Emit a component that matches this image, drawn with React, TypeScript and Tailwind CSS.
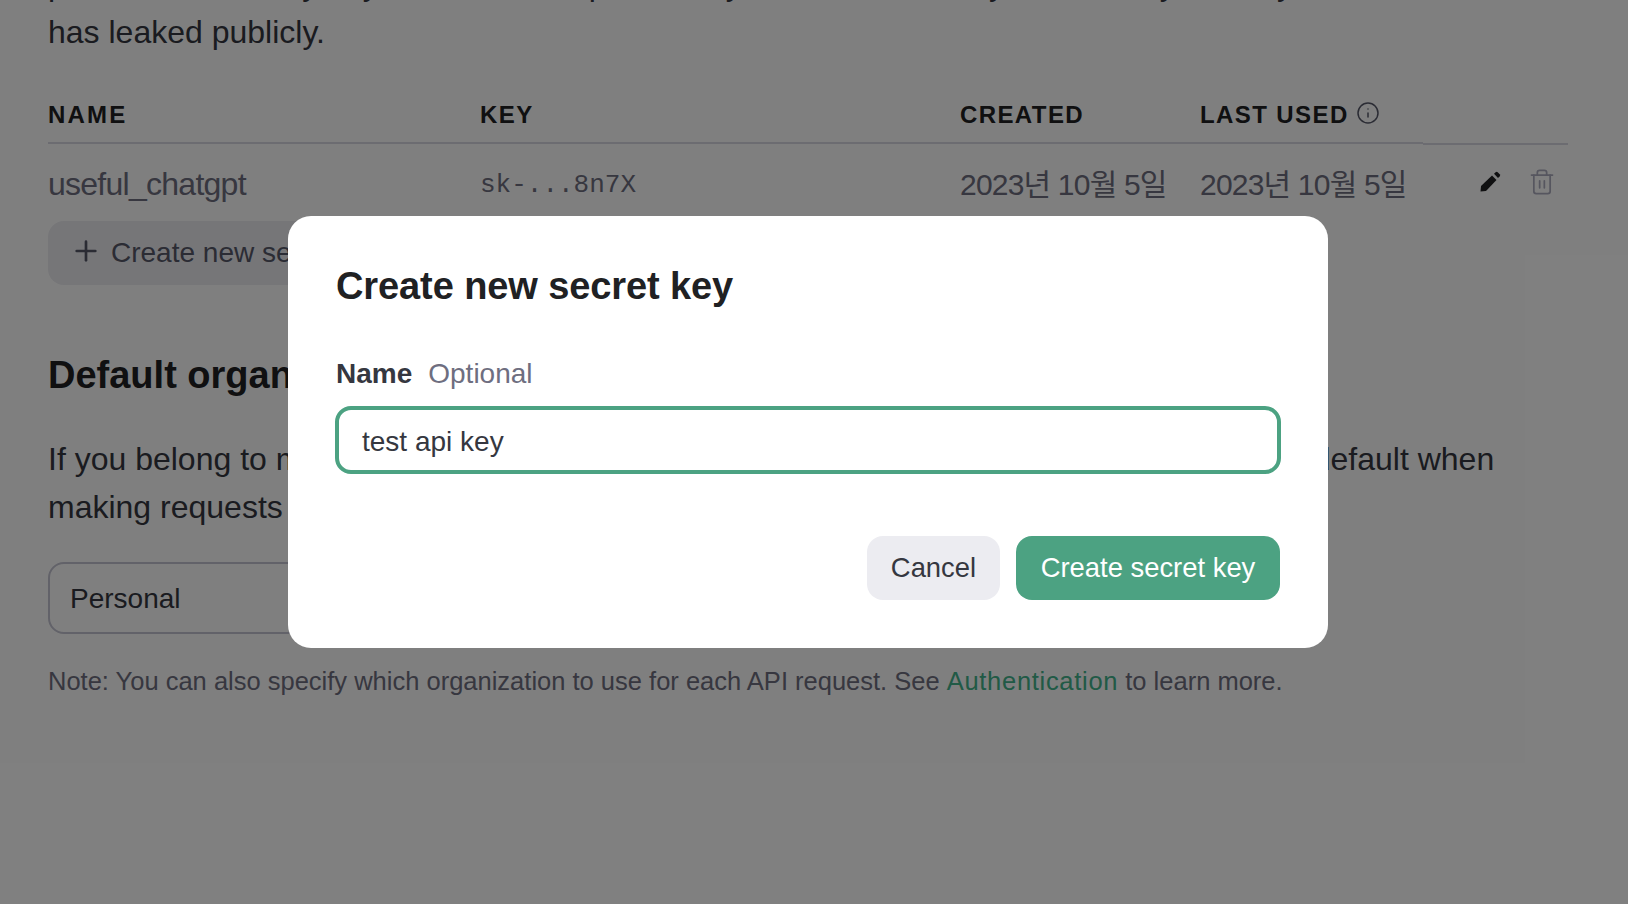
import { Plus, Info, Trash2 } from "lucide-react";

const font = { fontFamily: '"Liberation Sans", "Noto Sans CJK KR", sans-serif' };

const Modal = () => (
  <div className="absolute inset-0 bg-black/50">
    <div className="absolute left-[288px] top-[216px] w-[1040px] h-[432px] bg-white rounded-[23px] px-[48px] pt-[48px]">
      <h2 className="text-[38px] leading-[44px] font-bold text-[#202123] tracking-[-0.1px]">
        Create new secret key
      </h2>
      <div className="mt-[48px] flex gap-[16px] text-[28px] leading-[36px]">
        <span className="font-bold text-[#353740]">Name</span>
        <span className="text-[#6e6e80]">Optional</span>
      </div>
      <div className="mt-[14px] -mx-[1px] h-[68px] border-[4px] border-[#4ca282] rounded-[16px] flex items-center pt-[4px] px-[23px] text-[28px] text-[#353740]">
        test api key
      </div>
      <div className="mt-[62px] flex justify-end gap-[16px] text-[27.4px]">
        <button className="h-[64px] w-[133px] rounded-[16px] bg-[#ececf1] text-[#353740]">Cancel</button>
        <button className="h-[64px] w-[264px] rounded-[16px] bg-[#4ca282] text-white">Create secret key</button>
      </div>
    </div>
  </div>
);

export default function App() {
  return (
    <div style={font} className="relative h-[904px] w-full overflow-hidden bg-white text-[#353740]">
      <div className="pl-[48px] pr-[60px] -mt-[39px]">
        <p className="text-[32px] leading-[46px] whitespace-nowrap text-[#353740]">
          protect the security of your account, OpenAI may also automatically disable any API key that we've found
        </p>
        <p className="mt-[2px] text-[32px] leading-[46px] text-[#353740]">has leaked publicly.</p>

        {/* table head, the last cell's rule sits a pixel lower */}
        <div className="mt-[42px] grid grid-cols-[432px_480px_240px_223px_1fr] items-start text-[24px] font-bold tracking-[1.4px] text-[#202123]">
          <div className="h-[47px] border-b-2 border-[#d9d9e3] tracking-[2.2px]">NAME</div>
          <div className="h-[47px] border-b-2 border-[#d9d9e3]">KEY</div>
          <div className="h-[47px] border-b-2 border-[#d9d9e3]">CREATED</div>
          <div className="h-[47px] border-b-2 border-[#d9d9e3] flex items-start gap-[7px] whitespace-nowrap">
            LAST USED <Info className="w-[24px] h-[24px] mt-[4px] shrink-0 text-[#565869]" strokeWidth={1.5} />
          </div>
          <div className="h-[48px] border-b-2 border-[#d9d9e3]" />
        </div>
        <div className="grid grid-cols-[432px_480px_240px_1fr] h-[76px] pt-[2px] items-center text-[32px] text-[#6e6e80]">
          <div className="tracking-[-0.74px]">useful_chatgpt</div>
          <div className="font-['Liberation_Mono'] text-[26px] pt-[2px]">sk-...8n7X</div>
          <div className="whitespace-nowrap text-[30px] tracking-[-0.8px]">2023년 10월 5일</div>
          <div className="flex items-center justify-between pr-[12px]">
            <span className="whitespace-nowrap text-[30px] tracking-[-0.8px]">2023년 10월 5일</span>
            <span className="flex items-center gap-[26px] -mt-[4px]">
              <svg viewBox="0 0 24 24" className="w-[24px] h-[24px] text-[#202123]" fill="currentColor">
                <path d="M2.5 21.5 3 16 14 5.5 18.5 10 8 21Z" />
                <path d="M16 3.8l1.6-1.6a1.5 1.5 0 0 1 2.1 0l2 2a1.5 1.5 0 0 1 0 2.1L20 8Z" />
              </svg>
              <Trash2 className="w-[28px] h-[28px] text-[#acacbe]" strokeWidth={1.5} />
            </span>
          </div>
        </div>
        <button className="flex items-center gap-[9px] h-[64px] w-[300px] rounded-[16px] bg-[#ececf1] pl-[22px] text-[28px] text-[#565869] whitespace-nowrap">
          <Plus className="w-[32px] h-[32px] shrink-0 -mt-[4px]" strokeWidth={2} />
          Create new secret key
        </button>

        <h2 className="mt-[67px] text-[38px] leading-[46px] font-bold text-[#202123]">Default organization</h2>
        <p className="mt-[37px] text-[32px] leading-[48px] w-[1480px]">
          If you belong to multiple organizations, this setting controls which organization is used by default when making requests with the API keys above.
        </p>
        <div className="mt-[31px] h-[72px] w-[400px] rounded-[16px] border-2 border-[#c5c5d2] flex items-center pt-[2px] px-[20px] text-[28px]">
          Personal
        </div>
        <p className="mt-[29px] text-[25.5px] leading-[36px] text-[#6e6e80]">
          Note: You can also specify which organization to use for each API request. See{" "}
          <span className="text-[#42b48c] tracking-[0.7px]">Authentication</span> to learn more.
        </p>
      </div>
      <Modal />
    </div>
  );
}
